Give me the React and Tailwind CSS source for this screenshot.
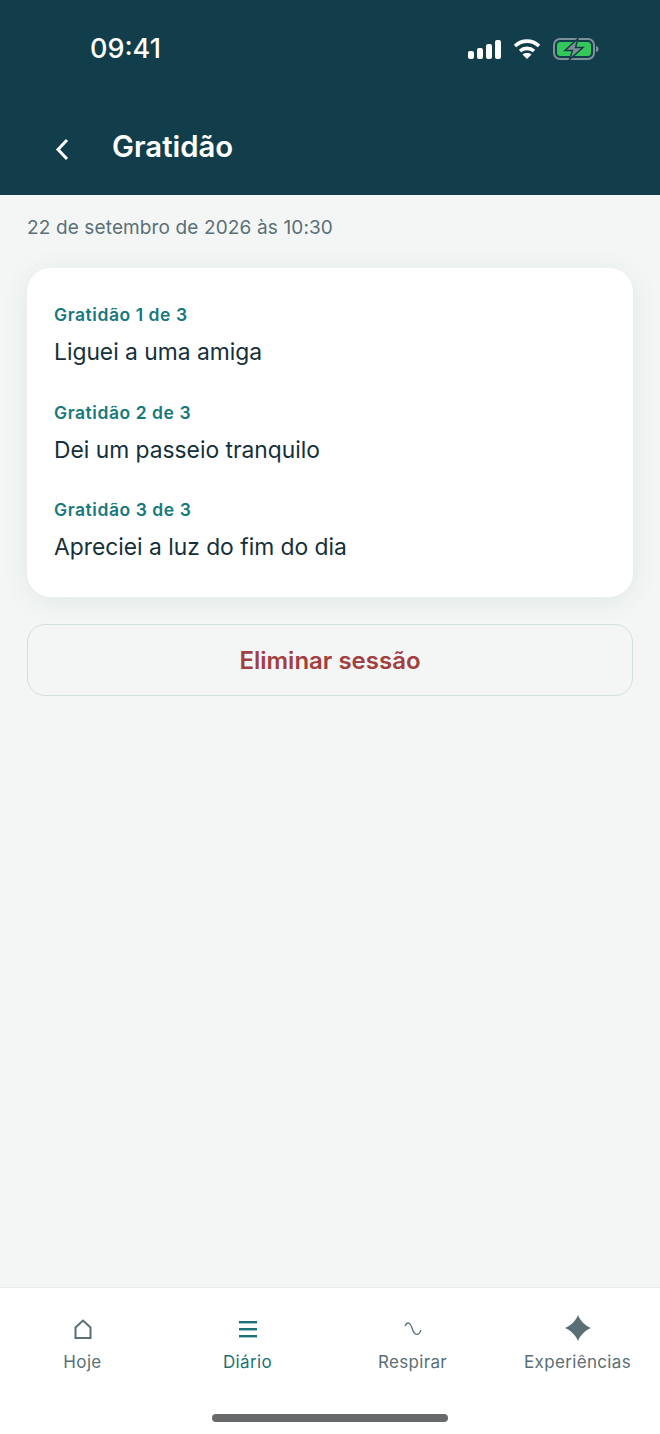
import React from 'react';

const entries = [
    { label: 'Gratidão 1 de 3', text: 'Liguei a uma amiga' },
    { label: 'Gratidão 2 de 3', text: 'Dei um passeio tranquilo' },
    { label: 'Gratidão 3 de 3', text: 'Apreciei a luz do fim do dia' },
];

const StatusIcons = () => (
    <div className="flex items-center gap-[11px]">
        <svg width="34" height="20" viewBox="0 0 34 20" fill="#fff">
            <rect x="0" y="12" width="6" height="8" rx="2" />
            <rect x="9" y="9" width="6" height="11" rx="2" />
            <rect x="18" y="5" width="6" height="15" rx="2" />
            <rect x="27" y="1" width="6" height="19" rx="2" />
        </svg>
        <svg width="28" height="20" viewBox="0 0 28 20" fill="none" stroke="#fff" strokeWidth="3.6">
            <path d="M2 7 C9 0.5 19 0.5 26 7" />
            <path d="M7 12 C11 8.5 17 8.5 21 12" />
            <path d="M14 20 L9.5 15.5 C12 13.6 16 13.6 18.5 15.5 Z" fill="#fff" stroke="none" />
        </svg>
        <svg width="46" height="22" viewBox="0 0 46 22" fill="none" className="ml-[1px]">
            <rect x="1" y="1" width="40" height="20" rx="6" stroke="#7d9196" strokeWidth="2" />
            <rect x="4" y="4" width="34" height="14" rx="3.5" fill="#34c759" />
            <path d="M43 8 C45 8.5 45.5 9.5 45.5 11 C45.5 12.5 45 13.5 43 14 Z" fill="#7d9196" />
            <path d="M25 0.5 L12 12.5 H19.5 L16.5 21.5 L30 9.5 H22.5 Z" fill="#7d9196" stroke="#123e4b" strokeWidth="1.5" />
        </svg>
    </div>
);

const TabItem = ({ icon, label, active }) => (
    <div className={`flex-1 flex flex-col items-center ${active ? 'text-[#1c7079]' : 'text-[#5a6f75]'}`}>
        <div className="h-[26px] flex items-center justify-center">{icon}</div>
        <span className="mt-[9px] text-[17px] leading-[22px] tracking-[0.35px]">{label}</span>
    </div>
);

const App = () => {
    return (
        <div className="w-[660px] h-[1434px] flex flex-col bg-[#f3f6f5] font-['Inter','Liberation_Sans',sans-serif] overflow-hidden">
            <header className="h-[195px] shrink-0 bg-[#123e4b] text-white">
                <div className="flex items-center justify-between pt-[32px] pl-[90px] pr-[61px] h-[66px]">
                    <span className="text-[27px] leading-[34px] font-medium">09:41</span>
                    <StatusIcons />
                </div>
                <div className="flex items-center pl-[54px] mt-[54px] h-[54px]">
                    <svg width="16" height="24" viewBox="0 0 16 24" fill="none" stroke="#fff" strokeWidth="3" className="mt-[4px]">
                        <path d="M13 3 L4 12.5 L13 22" />
                    </svg>
                    <h1 className="ml-[42px] text-[29.3px] leading-[36px] font-semibold">Gratidão</h1>
                </div>
            </header>

            <main className="flex-1 px-[27px]">
                <p className="mt-[21px] text-[19px] leading-[24px] tracking-[0.13px] text-[#5a6f75]">22 de setembro de 2026 às 10:30</p>

                <section className="mt-[28px] bg-white rounded-[24px] px-[27px] py-[36px] flex flex-col gap-[35.5px] shadow-[0_4px_28px_rgba(18,62,75,0.08)]">
                    {entries.map(entry => (
                        <div key={entry.label}>
                            <p className="text-[17.5px] leading-[21px] tracking-[0.55px] font-semibold text-[#17797c]">{entry.label}</p>
                            <p className="mt-[13px] text-[22.8px] leading-[28px] text-[#14303a]">{entry.text}</p>
                        </div>
                    ))}
                </section>

                <button className="mt-[27px] w-full h-[72px] pt-[2px] rounded-[18px] border border-[#d2e0de] text-[24px] font-semibold text-[#a1403f]">
                    Eliminar sessão
                </button>
            </main>

            <nav className="h-[147px] shrink-0 bg-white border-t border-[#e9eeed] flex flex-col">
                <div className="flex pt-[28px]">
                    <TabItem
                        label="Hoje"
                        icon={
                            <svg width="18" height="20" viewBox="0 0 18 20" fill="none" stroke="currentColor" strokeWidth="2">
                                <path d="M1.5 19 V8.5 L9 1.5 L16.5 8.5 V19 Z" />
                            </svg>
                        }
                    />
                    <TabItem
                        active
                        label="Diário"
                        icon={
                            <svg width="18" height="18" viewBox="0 0 18 18" fill="currentColor">
                                <rect y="1" width="18" height="2.4" />
                                <rect y="8" width="18" height="2.4" />
                                <rect y="15" width="18" height="2.4" />
                            </svg>
                        }
                    />
                    <TabItem
                        label="Respirar"
                        icon={
                            <svg width="18" height="16" viewBox="0 0 18 16" fill="none" stroke="currentColor" strokeWidth="1.3">
                                <path d="M1 5 C3 0.5 6 1 8 7 C10 14 14.5 16 17 9" />
                            </svg>
                        }
                    />
                    <TabItem
                        label="Experiências"
                        icon={
                            <svg width="26" height="26" viewBox="0 0 26 26" fill="currentColor" className="-mt-[3px]">
                                <path d="M13 0 C15 5.5 20 10.5 26 13 C20 15.5 15 20.5 13 26 C11 20.5 6 15.5 0 13 C6 10.5 11 5.5 13 0 Z" />
                            </svg>
                        }
                    />
                </div>
                <div className="mt-[41px] mx-auto w-[236px] h-[8px] rounded-full bg-[#68696b]" />
            </nav>
        </div>
    );
};

export default App;
